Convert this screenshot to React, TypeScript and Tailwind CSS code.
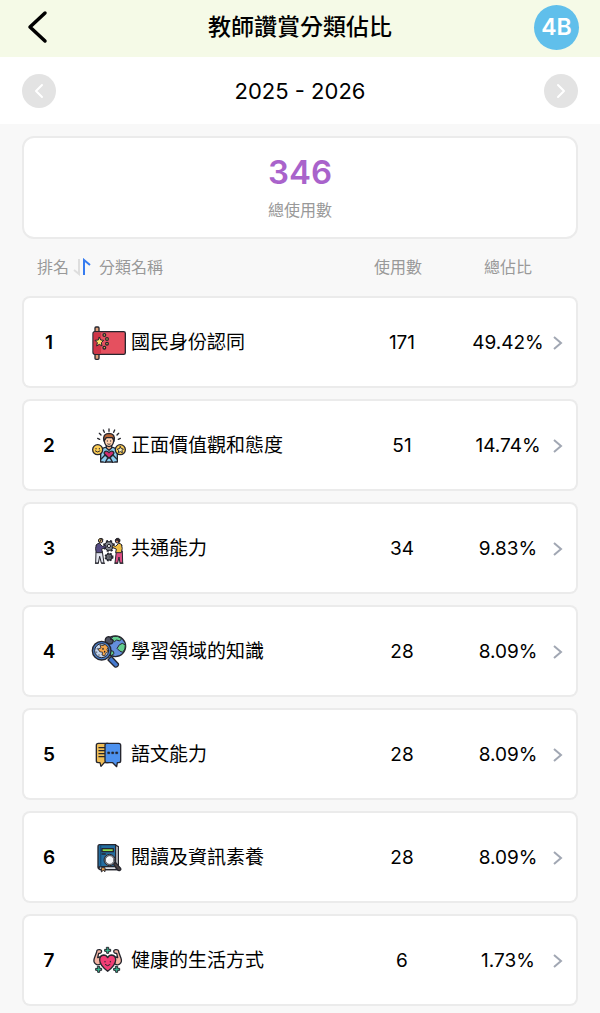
import React from "react";
import { ChevronLeft, ChevronRight } from "lucide-react";

const INK = "#26262e";

const iconProps = {
  className: "w-9 h-9 shrink-0",
  stroke: INK,
  strokeWidth: 4,
  strokeLinecap: "round" as const,
  strokeLinejoin: "round" as const,
  "aria-hidden": true,
};

function FlagIcon() {
  return (
    <svg {...iconProps} viewBox="21 21 108 108">
      <rect x="33" y="27" width="12" height="97" rx="3" fill="#e0a07a" />
      <path d="M33 41H119q5 0 5 5V104q0 5-5 5H33q-6 0-6-6V47q0-6 6-6z" fill="#e5505f" />
      <path d="M29 44h22v63H33q-4 0-4-5z" fill="#cf3547" stroke="none" />
      <path d="M46 58l4 8 9 1-7 7 2 10-8-5-8 5 2-10-7-7 9-1z" fill="#ffe169" strokeWidth="3" />
      <circle cx="61" cy="51" r="4" fill="#ffd64f" />
      <circle cx="69" cy="63" r="4" fill="#ffd64f" />
      <circle cx="69" cy="77" r="4" fill="#ffd64f" />
      <circle cx="61" cy="89" r="4" fill="#ffd64f" />
    </svg>
  );
}

function AttitudeIcon() {
  return (
    <svg {...iconProps} viewBox="21 18 108 108">
      <path d="M75 21v7M58 24l3 7M92 24l-3 7M46 34l5 5M104 34l-5 5M41 49l6 3M109 49l-6 3" fill="none" />
      <path d="M50 120V91q1-13 14-15h22q13 2 14 15v29z" fill="#8ccdf0" />
      <path d="M67 69v9l8 7 8-7v-9z" fill="#efb18c" />
      <path d="M61 48q0-11 14-11t14 11v9q-1 15-14 17-13-2-14-17z" fill="#ffd0ad" />
      <path d="M60 57q-5-22 15-23 20 1 15 23l-5-10H67z" fill="#b76535" />
      <path d="M70 56v2M80 56v2M71 66q4 3 8 0" fill="none" strokeWidth="2.5" />
      <path d="M75 109L62 97q-4-6 2-9 6-2 11 4 5-6 11-4 6 3 2 9z" fill="#cf2d70" />
      <path d="M50 113l13-14 9 8-8 14M100 113L87 99l-9 8 8 14" fill="#8ccdf0" />
      <circle cx="41" cy="83" r="15" fill="#ffcf55" />
      <circle cx="109" cy="83" r="15" fill="#ffcf55" />
      <path d="M36 79v2M46 79v2M34 87q7 7 14 0" fill="none" strokeWidth="3" />
      <path d="M109 74l3 6 6 1-4 5 1 6-6-3-6 3 1-6-4-5 6-1z" fill="#fff3bb" strokeWidth="3" />
    </svg>
  );
}

function TeamworkIcon() {
  return (
    <svg {...iconProps} viewBox="21 17 108 108">
      <circle cx="75" cy="62" r="15" fill="#858991" strokeWidth="6" strokeDasharray="6 6" strokeLinecap="butt" />
      <circle cx="75" cy="62" r="13" fill="#858991" strokeWidth="3" />
      <circle cx="75" cy="62" r="5" fill="#e2e3e6" strokeWidth="3" />
      <circle cx="75" cy="95" r="11" fill="#70747d" strokeWidth="5" strokeDasharray="5 4" strokeLinecap="butt" />
      <circle cx="75" cy="95" r="9" fill="#70747d" strokeWidth="3" />
      <circle cx="75" cy="95" r="3" fill="#d5d6d9" strokeWidth="2" />
      <g strokeWidth="3">
        <path d="M36 80l-1 33h8l4-20 5 20h8l-5-34z" fill="#e3e6ef" />
        <path d="M37 59q3-6 9-5l9 9 10-3 2 6-14 5 2 11H37q-5-13 0-23z" fill="#554b83" />
        <circle cx="50" cy="47" r="6" fill="#f2bd88" />
        <path d="M43 46q0-7 8-7 6 0 6 5l-7-1-2 7z" fill="#f0c258" />
        <path d="M97 78l-4 35h8l4-18 3 18h8l-1-35z" fill="#dc4c83" />
        <path d="M113 59q-3-6-9-5l-9 9-9-3-2 6 13 5-2 11h17q5-13 1-23z" fill="#efbd43" />
        <circle cx="100" cy="47" r="6" fill="#c98260" />
        <path d="M94 44q2-7 9-5 8 3 3 12l-5-6z" fill="#32282e" />
        <path d="M34 114h9M53 114h9M92 114h9M108 114h9" />
      </g>
    </svg>
  );
}

function KnowledgeIcon() {
  return (
    <svg {...iconProps} viewBox="21 18 108 108">
      <circle cx="94" cy="55" r="31" fill="#648fdc" />
      <path d="M88 25q14-3 25 7l-6 7-9-3-7 5-8-8z" fill="#63ce8e" strokeWidth="3" />
      <path d="M107 50l8-4 9 5q1 13-8 22l-9-4-7-7z" fill="#63ce8e" strokeWidth="3" />
      <path d="M78 67l10 3 2 7-7 5-8-3z" fill="#63ce8e" strokeWidth="3" />
      <path d="M64 42q-2-14 9-16 8 0 7 8 8-1 7 7-2 8-12 7z" fill="#4f5362" />
      <path d="M76 91l6-6 21 22q2 4-2 8-5 4-9 1L72 96z" fill="#4479cf" />
      <circle cx="53" cy="68" r="28" fill="#477bc4" />
      <circle cx="53" cy="68" r="21" fill="#c7d7ed" strokeWidth="3" />
      <path d="M49 51l8 2 6-4 9 9-3 7 3 6-7 5-3 8-8-3 2-8-9-2-5-8 8-3z" fill="#f4a64b" strokeWidth="2.5" />
      <path d="M40 61v2M38 72v2M45 80v2" stroke="#6d7b91" />
      <path d="M57 61v3M62 70v2" />
    </svg>
  );
}

function LanguageIcon() {
  return (
    <svg {...iconProps} viewBox="21 19 108 108">
      <path d="M43 38h29v58H61L51 107l-3-11h-5q-6 0-6-6V44q0-6 6-6z" fill="#efbd56" />
      <path d="M45 51h17M45 60h17M45 69h17M45 78h17" />
      <path d="M68 38h36q6 0 6 6v46q0 6-6 6h-4l-2 12-12-12H68q-5 0-5-6V44q0-6 5-6z" fill="#4d91ee" />
      <path d="M72 64h5v5h-5zM84 64h5v5h-5zM96 64h5v5h-5z" fill={INK} strokeWidth="2" />
    </svg>
  );
}

function ReadingIcon() {
  return (
    <svg {...iconProps} viewBox="21 18 108 108">
      <path d="M94 33l9 5v69H50l-7-8z" fill="#e7e8ec" />
      <path d="M47 32h48v67H49q-4 0-5 5-2-2-2-6V38q0-6 5-6z" fill="#236da0" />
      <path d="M45 102q0-4 6-4h46v9H48q-3-1-3-5z" fill="#d9dce3" />
      <path d="M50 34v62" stroke="#164d77" />
      <rect x="54" y="44" width="34" height="9" fill="#8eda4d" />
      <path d="M54 60h10" />
      <path d="M53 101h10v12l-5-4-5 4z" fill="#eca14c" strokeWidth="3" />
      <path d="M89 91l6-5 15 17q2 4-2 6-4 2-7-1z" fill="#4b4143" />
      <circle cx="77" cy="78" r="17" fill="#858a93" strokeWidth="3" />
      <circle cx="77" cy="78" r="13" fill="#f1f3f7" strokeWidth="2" />
      <path d="M70 77q1-5 6-6" fill="none" stroke="#fff" />
    </svg>
  );
}

function HealthIcon() {
  return (
    <svg {...iconProps} viewBox="21 18 108 108">
      <path d="M54 76Q44 88 35 81q-8-5-4-17l7-19q0-8 9-7 8 1 5 8-3 4-8 3l-3 13q7-5 15 2z" fill="#f5b5a4" />
      <path d="M88 76q10 12 19 5 8-5 4-17l-7-19q0-8-9-7-8 1-5 8 3 4 8 3l3 13q-7-5-15 2z" fill="#f5b5a4" />
      <path d="M71 103Q47 84 47 69q0-14 12-15 8 0 12 8 4-8 12-8 12 1 12 15 0 15-24 34z" fill="#f23d75" />
      <path d="M63 73v2M79 73v2M64 83q7 7 14 0" fill="none" strokeWidth="3" />
      <g fill="#35bd91" strokeWidth="3">
        <path d="M68 31h6v6h6v6h-6v6h-6v-6h-6v-6h6z" />
        <path d="M41 88h6v6h6v6h-6v6h-6v-6h-6v-6h6z" />
        <path d="M95 88h6v6h6v6h-6v6h-6v-6h-6v-6h6z" />
      </g>
    </svg>
  );
}

function SortIcon() {
  return (
    <svg width="18" height="18" viewBox="0 0 18 18" fill="none" strokeWidth="2" aria-hidden>
      <path d="M6 1v15L1 12" stroke="#dedede" />
      <path d="M11 17V2l6 5" stroke="#367cf0" />
    </svg>
  );
}

const rows = [
  { name: "國民身份認同", used: 171, share: "49.42%", Icon: FlagIcon },
  { name: "正面價值觀和態度", used: 51, share: "14.74%", Icon: AttitudeIcon },
  { name: "共通能力", used: 34, share: "9.83%", Icon: TeamworkIcon },
  { name: "學習領域的知識", used: 28, share: "8.09%", Icon: KnowledgeIcon },
  { name: "語文能力", used: 28, share: "8.09%", Icon: LanguageIcon },
  { name: "閱讀及資訊素養", used: 28, share: "8.09%", Icon: ReadingIcon },
  { name: "健康的生活方式", used: 6, share: "1.73%", Icon: HealthIcon },
];

export default function App() {
  return (
    <div className="min-h-screen bg-[#f8f8f8] text-black font-[Inter,'Noto_Sans_CJK_TC',sans-serif]">
      <header className="flex items-center justify-between h-[57px] px-[21px] pb-[3px] bg-[#f5fae7]">
        <button aria-label="返回" className="flex w-[45px]">
          <svg width="32" height="34" viewBox="0 0 32 34" fill="none" stroke="#000" strokeWidth="3.5" strokeLinecap="round" strokeLinejoin="round">
            <path d="M24 3L9 17l15 14" />
          </svg>
        </button>
        <h1 className="text-[23px] leading-8 font-medium">教師讚賞分類佔比</h1>
        <button className="w-[45px] h-[45px] rounded-full bg-[#60bfeb] text-white text-[23px] font-semibold">4B</button>
      </header>

      <div className="flex items-center justify-between h-[67px] px-[22px] bg-white">
        <button aria-label="上一學年" className="flex items-center justify-center w-[34px] h-[34px] rounded-full bg-[#e3e3e3] text-white">
          <ChevronLeft className="w-6 h-6" />
        </button>
        <span className="text-[22px] leading-8">2025 - 2026</span>
        <button aria-label="下一學年" className="flex items-center justify-center w-[34px] h-[34px] rounded-full bg-[#e3e3e3] text-white">
          <ChevronRight className="w-6 h-6" />
        </button>
      </div>

      <main className="px-[22px] pt-3">
        <section className="flex flex-col items-center h-[103px] pt-[14px] bg-white border-2 border-[#ebebeb] rounded-xl">
          <p className="text-[33px] leading-10 font-semibold text-[#a963cb]">346</p>
          <p className="mt-1.5 text-[16px] leading-6 text-[#999]">總使用數</p>
        </section>

        <table className="w-full table-fixed border-separate border-spacing-x-0 border-spacing-y-[11px]">
          <colgroup>
            <col className="w-[69px]" />
            <col />
            <col className="w-[122px]" />
            <col className="w-[90px]" />
            <col className="w-[25px]" />
          </colgroup>
          <thead>
            <tr className="h-[35px] text-[16px] leading-6 text-[#999] *:p-0 *:pb-0.5">
              <th className="font-normal">
                <button className="flex items-center gap-1 ml-[15px] whitespace-nowrap">
                  排名
                  <SortIcon />
                </button>
              </th>
              <th className="text-left font-normal">
                <span className="ml-2">分類名稱</span>
              </th>
              <th className="font-normal">
                <span className="mr-2">使用數</span>
              </th>
              <th className="font-normal">總佔比</th>
              <td />
            </tr>
          </thead>
          <tbody>
            {rows.map(({ name, used, share, Icon }, i) => (
              <tr key={name} className="h-[92px] text-[19px] leading-7 *:p-0 *:pt-0.5 *:bg-white *:border-y-2 *:border-[#ebebeb]">
                <td className="border-l-2 rounded-l-lg font-semibold">
                  <span className="block w-[50px] text-center">{i + 1}</span>
                </td>
                <td>
                  <div className="flex items-center gap-1">
                    <Icon />
                    <span>{name}</span>
                  </div>
                </td>
                <td className="text-center">{used}</td>
                <td className="text-center">{share}</td>
                <td className="border-r-2 rounded-r-lg">
                  <button aria-label={name} className="flex">
                    <svg width="10" height="16" viewBox="0 0 10 16" fill="none" stroke="#a1a7b3" strokeWidth="2">
                      <path d="M1 2l7 6-7 6" />
                    </svg>
                  </button>
                </td>
              </tr>
            ))}
          </tbody>
        </table>
      </main>
    </div>
  );
}
